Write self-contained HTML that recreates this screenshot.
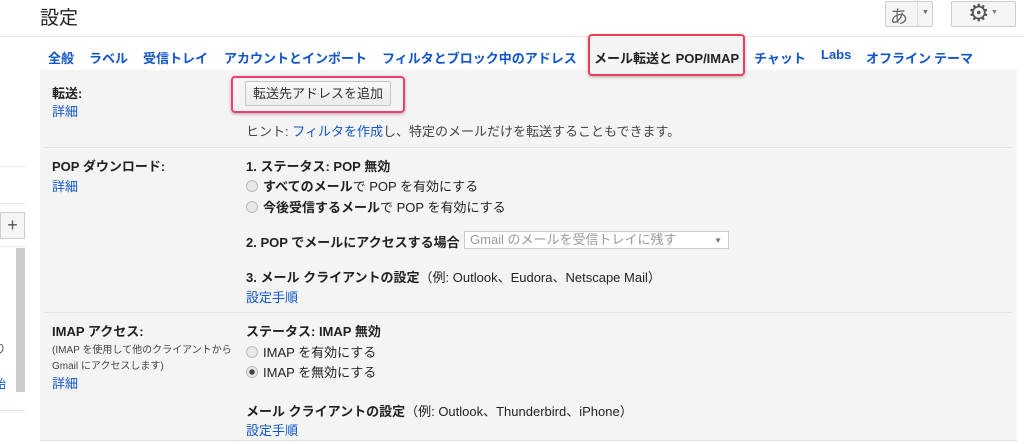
<!DOCTYPE html>
<html><head><meta charset="utf-8"><style>
*{margin:0;padding:0;box-sizing:border-box}
body{width:1024px;height:444px;background:#fff;font-family:"Liberation Sans","Noto Sans CJK JP",sans-serif;font-size:13px;color:#222;position:relative;overflow:hidden}
.a{position:absolute;white-space:nowrap}
.l{color:#15c}
.b{font-weight:bold}
.t{position:absolute;top:48px;font-weight:bold;color:#15c;white-space:nowrap;font-size:13px}
.r{display:inline-block;width:12px;height:12px;border-radius:50%;border:1px solid #bbb;background:#e8e8e8;vertical-align:-1px;margin-right:5px}
</style></head><body>
<div class="a" style="left:40px;top:3px;font-size:19px;color:#222">設定</div>
<div class="a" style="left:885px;top:1px;width:48px;height:26px;border:1px solid #ccc;background:#f5f5f5;border-radius:2px"></div>
<div class="a" style="left:890px;top:3px;font-size:18px;color:#666">あ</div>
<div class="a" style="left:917px;top:2px;width:1px;height:24px;background:#ddd"></div>
<div class="a" style="left:922px;top:9px;font-size:7px;color:#666">▼</div>
<div class="a" style="left:951px;top:1px;width:65px;height:26px;border:1px solid #ccc;background:#f5f5f5;border-radius:2px"></div>
<div class="a" style="left:968px;top:-1px;font-size:24px;color:#555">⚙</div>
<div class="a" style="left:991px;top:9px;font-size:7px;color:#777">▼</div>
<div class="a" style="left:0;top:36px;width:1024px;height:1px;background:#e5e5e5"></div>
<!-- left sidebar -->
<div class="a" style="left:0;top:166px;width:25px;height:1px;background:#e5e5e5"></div>
<div class="a" style="left:0;top:203px;width:25px;height:1px;background:#e5e5e5"></div>
<div class="a" style="left:0;top:212px;width:25px;height:27px;border:1px solid #ccc;background:#f5f5f5;color:#555;font-size:18px;text-align:center;line-height:24px">+</div>
<div class="a" style="left:0;top:246px;width:25px;height:1px;background:#e5e5e5"></div>
<div class="a" style="left:16px;top:248px;width:9px;height:144px;background:#ccc"></div>
<div class="a" style="left:-6px;top:340px;font-size:12px;color:#555">り</div>
<div class="a" style="left:-6px;top:375px;font-size:12px"><span class="l">始</span></div>
<div class="a" style="left:0;top:410px;width:25px;height:1px;background:#e5e5e5"></div>
<!-- content -->
<div class="a" style="left:40px;top:70px;width:977px;height:371px;background:#f4f4f4;border-bottom:1px solid #e3e3e3"></div>
<div class="a" style="left:589px;top:36px;width:155px;height:36px;background:#f4f4f4"></div>
<div class="t" style="left:48px">全般</div>
<div class="t" style="left:89px">ラベル</div>
<div class="t" style="left:143px">受信トレイ</div>
<div class="t" style="left:224px">アカウントとインポート</div>
<div class="t" style="left:382px">フィルタとブロック中のアドレス</div>
<div class="t" style="left:594px;color:#222">メール転送と POP/IMAP</div>
<div class="t" style="left:754px">チャット</div>
<div class="t" style="left:821px;top:47px">Labs</div>
<div class="t" style="left:866px">オフライン</div>
<div class="t" style="left:934px">テーマ</div>
<div class="a" style="left:588px;top:34px;width:157px;height:42px;border:2px solid #f03c5a;border-radius:4px;box-shadow:0 1px 3px rgba(0,0,0,.3)"></div>
<!-- forward -->
<div class="a b" style="left:52px;top:83px">転送:</div>
<div class="a l" style="left:52px;top:101px">詳細</div>
<div class="a" style="left:245px;top:81px;width:146px;height:25px;border:1px solid #c6c6c6;background:linear-gradient(#f8f8f8,#ececec);border-radius:2px;text-align:center;line-height:23px;color:#333">転送先アドレスを追加</div>
<div class="a" style="left:231px;top:76px;width:174px;height:37px;border:2px solid #f03c7a;border-radius:4px;box-shadow:0 1px 3px rgba(0,0,0,.3)"></div>
<div class="a" style="left:246px;top:121px;color:#444">ヒント: <span class="l">フィルタを作成</span>し、特定のメールだけを転送することもできます。</div>
<div class="a" style="left:44px;top:147px;width:968px;height:1px;background:#e3e3e3"></div>
<!-- POP -->
<div class="a b" style="left:52px;top:156px">POP ダウンロード:</div>
<div class="a l" style="left:52px;top:176px">詳細</div>
<div class="a b" style="left:246px;top:156px">1. ステータス: POP 無効</div>
<div class="a" style="left:246px;top:176px"><span class="r"></span><b>すべてのメール</b>で POP を有効にする</div>
<div class="a" style="left:246px;top:197px"><span class="r"></span><b>今後受信するメール</b>で POP を有効にする</div>
<div class="a b" style="left:246px;top:232px">2. POP でメールにアクセスする場合</div>
<div class="a" style="left:464px;top:231px;width:265px;height:18px;border:1px solid #ccc;background:#fff;color:#999;font-size:13px;line-height:16px;padding-left:5px">Gmail のメールを受信トレイに残す<span style="position:absolute;right:6px;top:1px;font-size:8px;color:#777">▼</span></div>
<div class="a" style="left:246px;top:267px"><b>3. メール クライアントの設定</b>（例: Outlook、Eudora、Netscape Mail）</div>
<div class="a l" style="left:246px;top:287px">設定手順</div>
<div class="a" style="left:44px;top:312px;width:968px;height:1px;background:#e3e3e3"></div>
<!-- IMAP -->
<div class="a b" style="left:52px;top:321px">IMAP アクセス:</div>
<div class="a" style="left:52px;top:341px;font-size:10px;color:#444">(IMAP を使用して他のクライアントから</div>
<div class="a" style="left:52px;top:357px;font-size:10px;color:#444">Gmail にアクセスします)</div>
<div class="a l" style="left:52px;top:373px">詳細</div>
<div class="a b" style="left:246px;top:321px">ステータス: IMAP 無効</div>
<div class="a" style="left:246px;top:342px"><span class="r"></span>IMAP を有効にする</div>
<div class="a" style="left:246px;top:362px"><span class="r" style="background:radial-gradient(circle,#444 0 2.5px,#e8e8e8 3px)"></span>IMAP を無効にする</div>
<div class="a" style="left:246px;top:401px"><b>メール クライアントの設定</b>（例: Outlook、Thunderbird、iPhone）</div>
<div class="a l" style="left:246px;top:420px">設定手順</div>
</body></html>
